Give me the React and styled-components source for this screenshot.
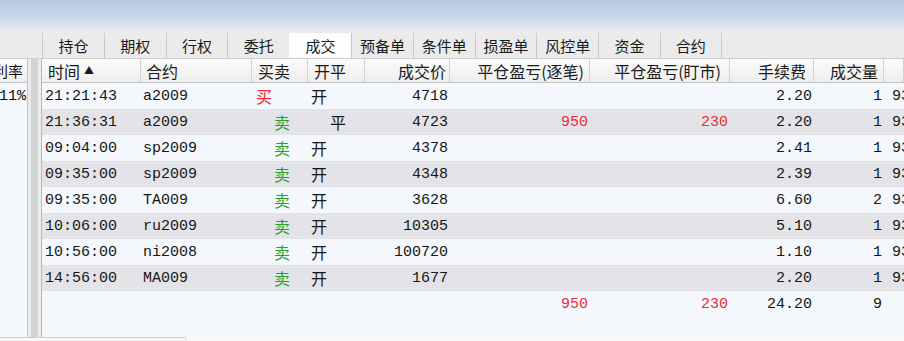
import React from "react";
import styled, { createGlobalStyle } from "styled-components";

const GlobalStyle = createGlobalStyle`
  body {
    margin: 0;
    background: #f4f7fb;
  }
`;

const Page = styled.div`
  width: 904px;
  height: 341px;
  overflow: hidden;
  display: flex;
  flex-direction: column;
  font-family: "Noto Sans CJK SC", "Noto Sans", sans-serif;
  color: #111;
`;

const TitleBand = styled.div`
  height: 30px;
  flex-shrink: 0;
  background: linear-gradient(to bottom, #b6cae3 0%, #c9d8ea 55%, #e3eaf2 100%);
`;

const TabStrip = styled.div`
  height: 29px;
  flex-shrink: 0;
  display: flex;
  align-items: flex-end;
  padding-left: 42px;
  background: #ebebeb;
  border-bottom: 1px solid #cfcfcf;
  box-sizing: border-box;
`;

const Tab = styled.div`
  width: 61.8px;
  height: 25px;
  box-sizing: border-box;
  display: flex;
  align-items: center;
  justify-content: center;
  font-size: 15px;
  color: #1a1a1a;
  background: ${(p) => (p.$active ? "#fdfdfd" : "transparent")};
  border-left: 1px solid ${(p) => (p.$active ? "transparent" : "#c9c9c9")};
  &:last-child {
    border-right: 1px solid #c9c9c9;
  }
`;

const Body = styled.div`
  flex: 1;
  display: flex;
  min-height: 0;
`;

const LeftPanel = styled.div`
  width: 27px;
  flex-shrink: 0;
  overflow: hidden;
  background: #f4f7fb;
  border-right: 1px solid #c4c4c4;
`;

const LeftHead = styled.div`
  height: 24px;
  box-sizing: border-box;
  display: flex;
  justify-content: flex-end;
  align-items: center;
  padding-right: 4px;
  font-size: 15px;
  white-space: nowrap;
  background: linear-gradient(to bottom, #fbfbfb, #eeeeee);
  border-bottom: 1px solid #c2c2c2;
`;

const LeftCell = styled.div`
  height: 26px;
  display: flex;
  justify-content: flex-end;
  align-items: center;
  padding-right: 1px;
  font-family: "Liberation Mono", "Noto Sans CJK SC", monospace;
  font-size: 15px;
`;

const Splitter = styled.div`
  width: 13px;
  flex-shrink: 0;
  display: flex;
  justify-content: center;
  background: #ececec;
  border-right: 1px solid #b9b9b9;
  &::before {
    content: "";
    width: 7px;
    background: #d3d3d3;
  }
`;

const Grid = styled.div`
  flex: 1;
  display: grid;
  grid-template-columns: 99px 111px 56px 57px 85px 140px 140px 84px 70px 1fr;
  grid-auto-rows: 26px;
  grid-template-rows: 24px;
  align-content: start;
  overflow: hidden;
  background: #f4f7fb;
`;

const HeadCell = styled.div`
  display: flex;
  align-items: center;
  justify-content: ${(p) => (p.$right ? "flex-end" : "flex-start")};
  padding: ${(p) => (p.$right ? `0 ${p.$pad}px 0 0` : `0 0 0 ${p.$pad}px`)};
  font-size: 16px;
  white-space: nowrap;
  color: #1a1a1a;
  background: linear-gradient(to bottom, #fbfbfb, #eeeeee);
  border-bottom: 1px solid #c2c2c2;
  border-right: 1px solid #d2d2d2;
  overflow: hidden;
`;

const SortMark = styled.span`
  font-size: 10px;
  margin-left: 4px;
  margin-top: -3px;
`;

const Cell = styled.div`
  display: flex;
  align-items: center;
  justify-content: ${(p) => (p.$right ? "flex-end" : "flex-start")};
  padding: ${(p) => (p.$right ? `0 ${p.$pad}px 0 0` : `0 0 0 ${p.$pad}px`)};
  font-family: "Liberation Mono", "Noto Sans CJK SC", monospace;
  font-size: 15px;
  white-space: nowrap;
  overflow: hidden;
  color: ${(p) => p.$color || "#161616"};
  background: ${(p) => (p.$stripe ? "#e4e4e8" : "#f4f7fb")};
`;

const CjkText = styled.span`
  font-family: "Noto Sans CJK SC", sans-serif;
  font-size: 16px;
`;

const Footer = styled.div`
  height: 4px;
  flex-shrink: 0;
  display: flex;
  background: #f7f8fa;
  &::before {
    content: "";
    width: 186px;
    border-top: 1px solid #cfcfcf;
    border-right: 1px solid #dcdcdc;
    border-top-right-radius: 3px;
  }
`;

const RED = "#ee2a3c";
const GREEN = "#26a326";

const tabs = ["持仓", "期权", "行权", "委托", "成交", "预备单", "条件单", "损盈单", "风控单", "资金", "合约"];

const trades = [
  ["21:21:43", "a2009", "买", "开", "4718", "", "", "2.20", "1"],
  ["21:36:31", "a2009", "卖", "平", "4723", "950", "230", "2.20", "1"],
  ["09:04:00", "sp2009", "卖", "开", "4378", "", "", "2.41", "1"],
  ["09:35:00", "sp2009", "卖", "开", "4348", "", "", "2.39", "1"],
  ["09:35:00", "TA009", "卖", "开", "3628", "", "", "6.60", "2"],
  ["10:06:00", "ru2009", "卖", "开", "10305", "", "", "5.10", "1"],
  ["10:56:00", "ni2008", "卖", "开", "100720", "", "", "1.10", "1"],
  ["14:56:00", "MA009", "卖", "开", "1677", "", "", "2.20", "1"],
];

const TradeRow = ({ t, stripe }) => (
  <>
    <Cell $pad={3} $stripe={stripe}>{t[0]}</Cell>
    <Cell $pad={2} $stripe={stripe}>{t[1]}</Cell>
    <Cell $pad={t[2] === "买" ? 4 : 22} $stripe={stripe} $color={t[2] === "买" ? RED : GREEN}>
      <CjkText>{t[2]}</CjkText>
    </Cell>
    <Cell $pad={t[3] === "平" ? 22 : 3} $stripe={stripe}>
      <CjkText>{t[3]}</CjkText>
    </Cell>
    <Cell $right $pad={2} $stripe={stripe}>{t[4]}</Cell>
    <Cell $right $pad={2} $stripe={stripe} $color={RED}>{t[5]}</Cell>
    <Cell $right $pad={2} $stripe={stripe} $color={RED}>{t[6]}</Cell>
    <Cell $right $pad={2} $stripe={stripe}>{t[7]}</Cell>
    <Cell $right $pad={2} $stripe={stripe}>{t[8]}</Cell>
    <Cell $pad={8} $stripe={stripe}>93</Cell>
  </>
);

export default function App() {
  return (
    <Page>
      <GlobalStyle />
      <TitleBand />
      <TabStrip>
        {tabs.map((t) => (
          <Tab key={t} $active={t === "成交"}>{t}</Tab>
        ))}
      </TabStrip>
      <Body>
        <LeftPanel>
          <LeftHead>利率</LeftHead>
          <LeftCell>11%</LeftCell>
        </LeftPanel>
        <Splitter />
        <Grid>
          <HeadCell $pad={6}>
            时间<SortMark>▲</SortMark>
          </HeadCell>
          <HeadCell $pad={5}>合约</HeadCell>
          <HeadCell $pad={6}>买卖</HeadCell>
          <HeadCell $pad={6}>开平</HeadCell>
          <HeadCell $right $pad={3}>成交价</HeadCell>
          <HeadCell $right $pad={5}>平仓盈亏(逐笔)</HeadCell>
          <HeadCell $right $pad={8}>平仓盈亏(盯市)</HeadCell>
          <HeadCell $right $pad={7}>手续费</HeadCell>
          <HeadCell $right $pad={5}>成交量</HeadCell>
          <HeadCell $pad={4} />
          {trades.map((t, i) => (
            <TradeRow key={i} t={t} stripe={i % 2 === 1} />
          ))}
          <Cell />
          <Cell />
          <Cell />
          <Cell />
          <Cell />
          <Cell $right $pad={2} $color={RED}>950</Cell>
          <Cell $right $pad={2} $color={RED}>230</Cell>
          <Cell $right $pad={2}>24.20</Cell>
          <Cell $right $pad={2}>9</Cell>
          <Cell />
        </Grid>
      </Body>
      <Footer />
    </Page>
  );
}
